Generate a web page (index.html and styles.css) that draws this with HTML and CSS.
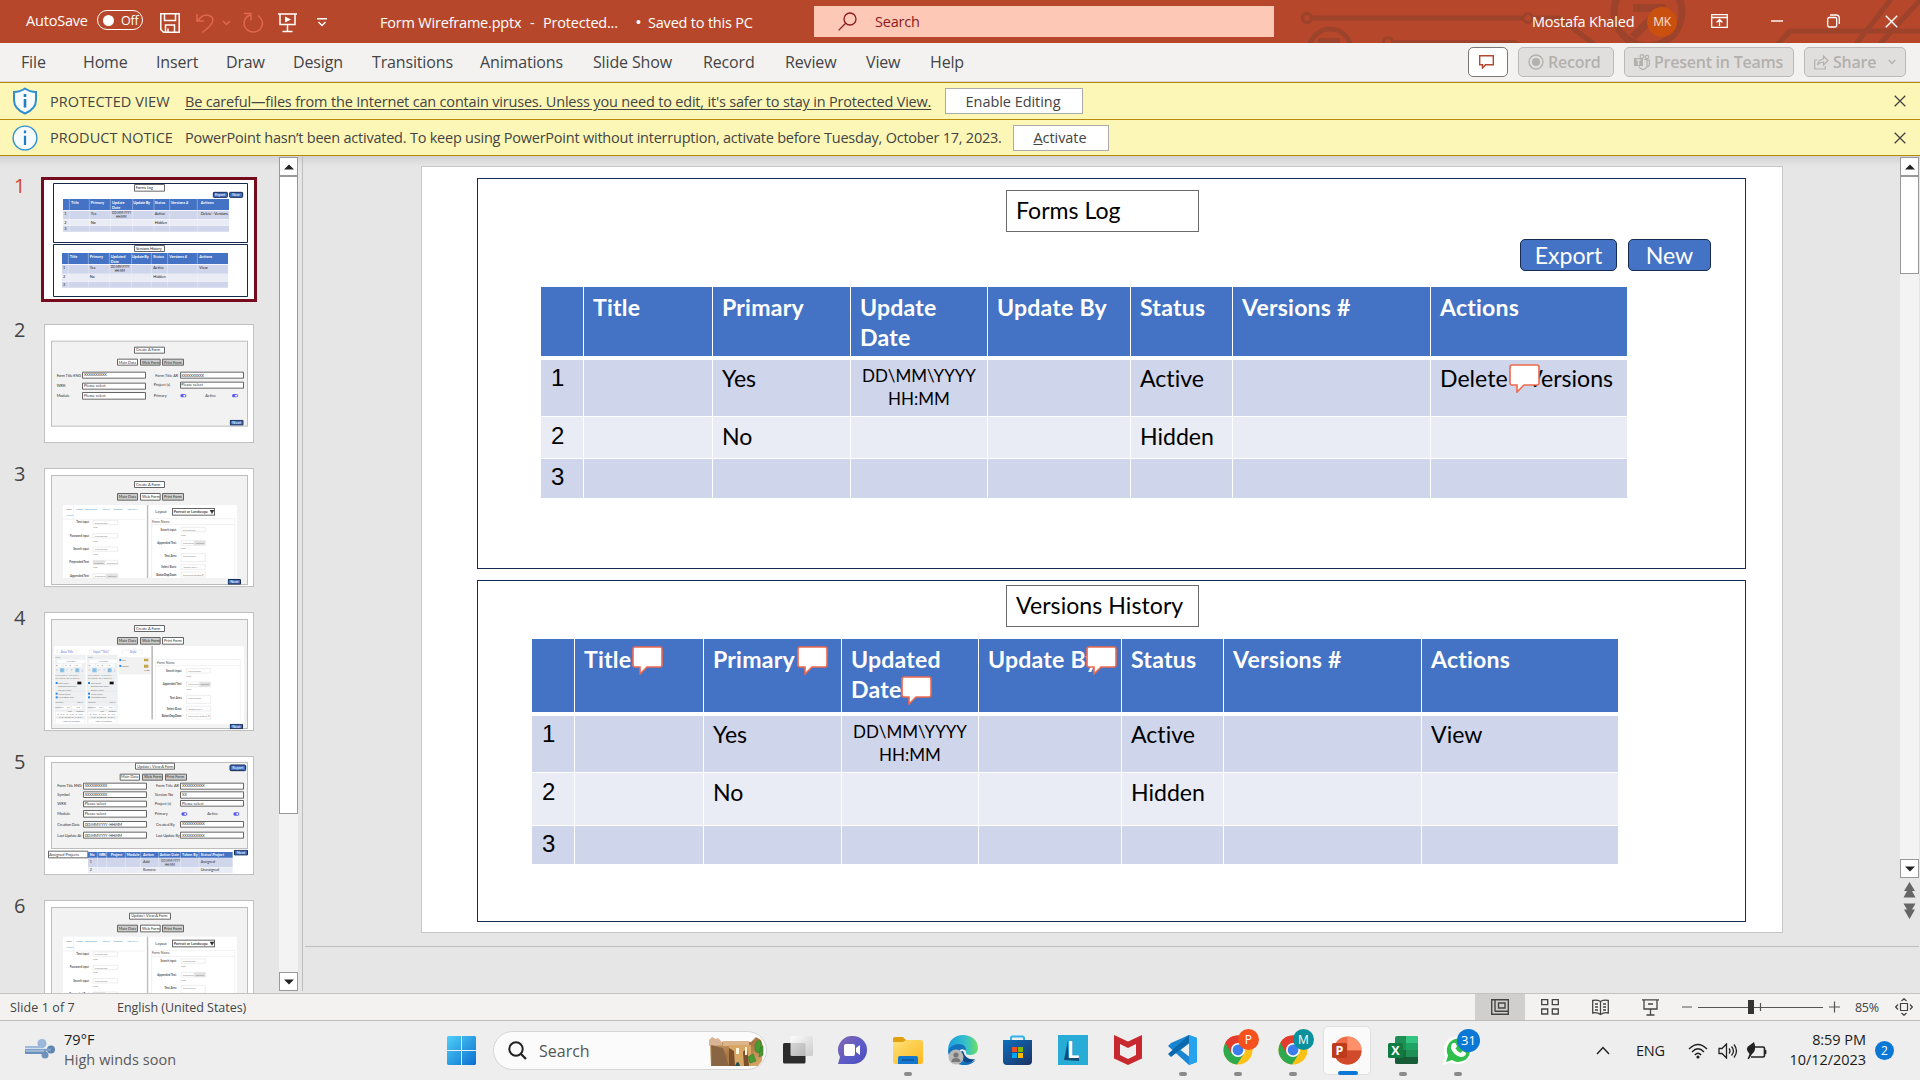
FILE: index.html
```html
<!DOCTYPE html>
<html lang="en">
<head>
<meta charset="utf-8">
<title>Form Wireframe.pptx - PowerPoint</title>
<link rel="stylesheet" href="styles.css">
</head>
<body>
<svg class="defs" width="0" height="0">
  <defs>
    <linearGradient id="gWin" x1="0" y1="0" x2="1" y2="1"><stop offset="0" stop-color="#4fd0f8"/><stop offset="1" stop-color="#0a6fd0"/></linearGradient>
    <linearGradient id="gPane" x1="0" y1="0" x2="1" y2="1"><stop offset="0" stop-color="#fff"/><stop offset="1" stop-color="#c4c4c4"/></linearGradient>
    <linearGradient id="gChat" x1="0" y1="0" x2="1" y2="1"><stop offset="0" stop-color="#8466b0"/><stop offset=".6" stop-color="#5a5bc8"/><stop offset="1" stop-color="#4a49b8"/></linearGradient>
    <linearGradient id="gFold" x1="0" y1="0" x2="1" y2="1"><stop offset="0" stop-color="#ffe07a"/><stop offset="1" stop-color="#fbb91c"/></linearGradient>
    <linearGradient id="gEdge" x1="0" y1="0" x2="1" y2="0"><stop offset="0" stop-color="#1b9de2"/><stop offset=".6" stop-color="#34c1c8"/><stop offset="1" stop-color="#6fdf63"/></linearGradient>
    <linearGradient id="gStore" x1="0" y1="0" x2="1" y2="1"><stop offset="0" stop-color="#0d6fc0"/><stop offset="1" stop-color="#1d3261"/></linearGradient>
    <linearGradient id="gRock" x1="0" y1="0" x2="1" y2="1"><stop offset="0" stop-color="#d8ae78"/><stop offset=".5" stop-color="#a87442"/><stop offset="1" stop-color="#dfae6a"/></linearGradient>
    <symbol id="note" viewBox="0 0 31 29"><path d="M3 1h25q2 0 2 2v16q0 2-2 2H15l-7 7v-7H3q-2 0-2-2V3q0-2 2-2z" fill="#fff" stroke="#ee6a4e" stroke-width="1.6"/></symbol>
    <symbol id="close" viewBox="0 0 12 12"><path d="M.7.7l10.6 10.6M11.3.7L.7 11.3" fill="none" stroke="currentColor" stroke-width="1.3"/></symbol>
    <symbol id="chrome" viewBox="0 0 30 30"><circle cx="15" cy="15" r="14.5" fill="#fbc116"/><path d="M2.4 7.8A14.5 14.5 0 0 1 27.6 7.8L15 8z" fill="#e33b2e"/><path d="M2.4 7.8A14.5 14.5 0 0 0 14 29.5l7-11L15 15z" fill="#2da94f"/><path d="M2.4 7.8L8.8 19 15 8h12.6A14.5 14.5 0 0 0 2.4 7.8z" fill="#e33b2e"/><circle cx="15" cy="15" r="7" fill="#fff"/><circle cx="15" cy="15" r="5.4" fill="#3b7ded"/></symbol>
    <!-- shared body of the web form slides, 630 x 357 slide units -->
    <symbol id="webform" viewBox="0 0 630 357">
      <rect x="57" y="111" width="250" height="219" fill="#fff"/><rect x="313" y="111" width="266" height="219" fill="#fff"/><rect x="309" y="111" width="3.5" height="219" fill="#bcbcbc"/>
      <path d="M57 154h32v-42M89 154h214" fill="none" stroke="#e6e6e6" stroke-width="1.5"/>
      <g font-size="7.800" fill="#5b9bd5"><text x="66" y="127" fill="#777">Input</text><text x="96" y="127" textLength="63">Radios / Checkboxes</text><text x="176" y="127">Select</text><text x="209" y="127">Buttons</text><text x="249" y="127" textLength="33">View HTML</text><text x="66" y="145">About</text></g>
      <g font-size="8.500" font-weight="bold" fill="#555" text-anchor="end"><text x="135" y="166">Text input</text><text x="135" y="206">Password input</text><text x="135" y="246">Search input</text><text x="135" y="286">Prepended Text</text><text x="135" y="326">Appended Text</text><text x="397" y="188">Search input</text><text x="397" y="228">Appended Text</text><text x="397" y="267">Text Area</text><text x="397" y="300">Select Basic</text><text x="397" y="323" textLength="60">Button Drop Down</text></g>
      <g fill="#fff" stroke="#ddd" stroke-width="1.5"><path d="M147 157h74v13h-74zM147 197h74v13h-74zM147 237h74v13h-74zM147 277h74v13h-74zM147 317h74v13h-74zM411 178h73v13h-73zM411 218h73v14h-73zM411 257h73v24h-73zM411 290h73v14h-73zM411 312h73v15h-73z"/></g>
      <path d="M147 277h36v13h-36zM186 317h36v13h-36zM450 218h34v14h-34z" fill="#e2e2e2"/>
      <g font-size="7.500" fill="#888"><text x="153" y="167">placeholder</text><text x="153" y="207">placeholder</text><text x="153" y="247">placeholder</text><text x="151" y="287">prepend</text><text x="189" y="287">placehold</text><text x="153" y="327">placehold</text><text x="191" y="327">append</text><text x="147" y="181">help</text><text x="147" y="221">help</text><text x="147" y="261">help</text><text x="147" y="301">help</text><text x="417" y="188">placeholder</text><text x="417" y="228">placehold</text><text x="455" y="228">append</text><text x="417" y="267">default text</text><text x="418" y="300">Option one ⌄</text><text x="417" y="323" textLength="64">placehold  Button ▾</text><text x="411" y="203">help</text><text x="411" y="243">help</text></g>
      <path d="M323 152h249v178M323 152v178M323 170h249" fill="none" stroke="#e2e2e2" stroke-width="1.5"/>
      <text x="324" y="164" font-size="10.500" fill="#555">Form Name</text><text x="334" y="135" font-size="11.500" fill="#333">Layout</text>
      <rect x="385.500" y="121.500" width="126" height="20" fill="#fff" stroke="#666" stroke-width="3"/><text x="389" y="135" font-size="11.500" textLength="103">Portrait or Landscape</text><path d="M497 126h14l-7 12z" fill="#333"/>
    </symbol>
    <symbol id="next" viewBox="0 0 38 16"><rect x="1.500" y="1.500" width="35" height="13" rx="2" fill="#4472c4" stroke="#172c51" stroke-width="3"/><text x="19" y="12" font-size="11" fill="#fff" text-anchor="middle">Next</text></symbol>
  </defs>
</svg>

<header class="titlebar">
  <svg class="circuit" width="640" height="43" viewBox="1280 0 640 43"><g fill="none" stroke="#9d432b" stroke-width="5"><circle cx="1307" cy="18" r="4.500" stroke-width="3.500"/><path d="M1312 18h211M1534 18h26l35 27"/><circle cx="1528" cy="18" r="4.500" stroke-width="3"/><circle cx="1388" cy="42" r="4.500" stroke-width="3"/><path d="M1394 42h120l8 4" stroke-width="4"/><circle cx="1330" cy="50" r="21"/><path d="M1318 42h22" stroke-width="8"/><circle cx="1648" cy="12" r="34" stroke-width="7"/><path d="M1633 8h33M1660 10l-27 27" stroke-width="8"/><path d="M1920 31h-130l-13 14M1892-2l-36 46M1922-2l-42 46"/></g></svg>
  <span class="autosave">AutoSave</span>
  <span class="toggle"><i></i>Off</span>
  <svg class="save" width="20" height="20" viewBox="0 0 20 20"><path d="M.8.8h18.400v18.400H3.500L.8 16.500zM4.500 1v6.500h11V1M5.500 19v-7h9v7M8 19v-3.500" fill="none" stroke="#fff" stroke-width="1.500"/></svg>
  <svg class="undo" width="36" height="22" viewBox="0 0 36 22"><path d="M1 2v7h7M1.500 9Q7 1.500 13 3.500T16 11Q14 15 6 20.500M27 9l3.500 3.500L34 9" fill="none" stroke="#e1684c" stroke-width="1.500"/></svg>
  <svg class="redo" width="21" height="22" viewBox="0 0 21 22"><path d="M1 1.500h7v7M7 3Q1 5.500 1 12a9.300 9 0 0 0 18.500 0Q19.500 7 15 3.500" fill="none" stroke="#e1684c" stroke-width="1.500"/></svg>
  <svg class="present" width="19" height="20" viewBox="0 0 19 20"><path d="M0 1h19M2 1v10.500h15V1M9.500 11.500V18M4.500 18.500h10" fill="none" stroke="#fff" stroke-width="1.500"/><path d="M7 3.500l6 3-6 3z" fill="#fff"/></svg>
  <svg class="custom" width="10" height="9" viewBox="0 0 10 9"><path d="M0 .8h10M1.500 4L5 7.500 8.500 4" fill="none" stroke="#fff" stroke-width="1.400"/></svg>
  <span class="doc"><span>Form Wireframe.pptx</span><span>-</span><span>Protected...</span><b>•</b><span>Saved to this PC</span></span>
  <div class="search"><svg width="19" height="19" viewBox="0 0 19 19"><circle cx="12" cy="7" r="6" fill="none" stroke="#8c1a1c" stroke-width="1.300"/><path d="M7.700 11.300L.6 18.400" stroke="#8c1a1c" stroke-width="1.300"/></svg>Search</div>
  <span class="user">Mostafa Khaled</span><span class="avatar">MK</span>
  <svg class="win w1" width="17" height="14" viewBox="0 0 17 14"><path d="M.7.7h15.600v12.600H.7zM.7 3.500h15.600M8.500 12V6M5.500 8.500l3-3 3 3" fill="none" stroke="#fff" stroke-width="1.300"/></svg>
  <svg class="win w2" width="12" height="2"><path d="M0 1h12" stroke="#fff" stroke-width="1.400"/></svg>
  <svg class="win w3" width="13" height="14" viewBox="0 0 13 14"><rect x=".7" y="3.500" width="9" height="9.500" rx="1.500" fill="none" stroke="#fff" stroke-width="1.300"/><path d="M3 1h6q3.300 0 3.300 3.300V10" fill="none" stroke="#fff" stroke-width="1.300"/></svg>
  <svg class="win w4" width="13" height="13"><use href="#close"/></svg>
</header>

<nav class="ribbon">
  <div class="tabs"><span>File</span><span>Home</span><span>Insert</span><span>Draw</span><span>Design</span><span>Transitions</span><span>Animations</span><span>Slide Show</span><span>Record</span><span>Review</span><span>View</span><span>Help</span></div>
  <div class="rbtn comment"><svg width="15" height="14" viewBox="0 0 15 14"><path d="M.7.7h13.600v9H6.500L3.500 13V9.700H.7z" fill="none" stroke="#b7472a" stroke-width="1.400"/></svg></div>
  <div class="rbtn rec"><svg width="16" height="16" viewBox="0 0 16 16"><circle cx="8" cy="8" r="7" fill="none" stroke="#b3b0ad" stroke-width="1.300"/><circle cx="8" cy="8" r="4" fill="#b3b0ad"/></svg>Record</div>
  <div class="rbtn teams"><svg width="16" height="16" viewBox="0 0 16 16"><path d="M0 4h9v8H0z" fill="#b3b0ad"/><path d="M2.500 6h4M4.500 6v5" stroke="#e1dfdd" stroke-width="1.400"/><g fill="none" stroke="#b3b0ad" stroke-width="1.200"><circle cx="8" cy="2.500" r="1.900"/><circle cx="13" cy="3" r="1.700"/><path d="M10 5.500h3v7q-1.500 3-4 3t-4-3M13 6h2.300v5q-1 2-2.500 2"/></g></svg>Present in Teams</div>
  <div class="rbtn share"><svg width="15" height="16" viewBox="0 0 15 16"><path d="M3.500 6H.7v9h10.600v-3M3.500 11q.5-5.500 6-6V2l4.500 4.500L9.500 11V8q-4 0-6 3z" fill="none" stroke="#b3b0ad" stroke-width="1.200"/></svg>Share<svg class="caret" width="8" height="6"><path d="M.7 1l3.300 3.500L7.300 1" fill="none" stroke="#b3b0ad" stroke-width="1.300"/></svg></div>
</nav>

<section class="notice first">
  <svg class="nicon" width="26" height="28" viewBox="0 0 26 28"><path d="M13 1.500Q18 5 24 5v8q0 9-11 13.500Q2 22 2 13V5q6 0 11-3.500z" fill="#f7fbfd" stroke="#2e8fd0" stroke-width="2"/><path d="M13 12v8.500M13 7v3" stroke="#1e7fc4" stroke-width="2.600"/></svg>
  <span class="kind">PROTECTED VIEW</span><span class="msg under">Be careful—files from the Internet can contain viruses. Unless you need to edit, it's safer to stay in Protected View.</span><span class="btn enable">Enable Editing</span>
  <svg class="x" width="12" height="12"><use href="#close"/></svg>
</section>
<section class="notice">
  <svg class="nicon" width="28" height="28" viewBox="0 0 28 28"><circle cx="14" cy="14" r="12.800" fill="#f7fbfd" stroke="#2e8fd0" stroke-width="1.500"/><path d="M14 11.500v10M14 6v3" stroke="#1e7fc4" stroke-width="2.400"/></svg>
  <span class="kind k2">PRODUCT NOTICE</span><span class="msg m2">PowerPoint hasn’t been activated. To keep using PowerPoint without interruption, activate before Tuesday, October 17, 2023.</span><span class="btn act"><u>A</u>ctivate</span>
  <svg class="x" width="12" height="12"><use href="#close"/></svg>
</section>

<main class="work">
  <aside class="thumbs">
    <div class="row on"><span class="num">1</span>
      <svg class="thumb" viewBox="0 0 630 357"><rect width="630" height="357" fill="#fff"/>
        <g fill="none" stroke="#16294d" stroke-width="3"><path d="M28.500 10.500h582v177h-582zM28.500 193.500h582v156h-582z"/></g>
        <g fill="#fff" stroke="#666" stroke-width="3"><path d="M271.500 13.500h90v20h-90zM271.500 196.500h90v18h-90z"/></g>
        <g fill="#4472c4" stroke="#16294d" stroke-width="3"><rect x="508" y="37" width="42" height="15" rx="2"/><rect x="557" y="37" width="39" height="15" rx="2"/></g>
        <path d="M57 57h498v33H57zM54 219h498v33H54z" fill="#4472c4"/>
        <path d="M57 92h498v26H57zM57 138h498v17H57zM54 254h498v27H54zM54 306h498v17H54z" fill="#cfd5ea"/><path d="M57 119h498v18H57zM54 282h498v23H54z" fill="#e9ebf5"/>
        <path d="M76 57v98M136 57v98M199 57v98M266 57v98M330 57v98M377 57v98M460 57v98M73 219v104M133 219v104M196 219v104M263 219v104M322 219v104M371 219v104M460 219v104" stroke="#fff" stroke-width="1.500" opacity=".7"/>
        <g font-size="11.500" fill="#222"><text x="275" y="27">Forms Log</text><text x="275" y="210" textLength="78">Versions History</text>
        <text x="61" y="105">1</text><text x="61" y="131">2</text><text x="61" y="150">3</text><text x="140" y="105">Yes</text><text x="140" y="131">No</text><text x="204" y="102" font-size="8.500">DD\MM\YYYY</text><text x="216" y="114" font-size="8.500">HH:MM</text><text x="332" y="105">Active</text><text x="332" y="131">Hidden</text><text x="470" y="105" textLength="82">Delete - Versions</text>
        <text x="57" y="267">1</text><text x="57" y="294">2</text><text x="57" y="318">3</text><text x="137" y="267">Yes</text><text x="137" y="294">No</text><text x="200" y="264" font-size="8.500">DD\MM\YYYY</text><text x="212" y="275" font-size="8.500">HH:MM</text><text x="328" y="267">Active</text><text x="328" y="294">Hidden</text><text x="466" y="267">View</text></g>
        <g font-size="11.500" font-weight="bold" fill="#fff"><text x="81" y="72">Title</text><text x="140" y="72">Primary</text><text x="204" y="72">Update</text><text x="204" y="86">Date</text><text x="268" y="72" textLength="50">Update By</text><text x="332" y="72">Status</text><text x="380" y="72">Versions #</text><text x="470" y="72">Actions</text><text x="77" y="234">Title</text><text x="137" y="234">Primary</text><text x="200" y="234">Updated</text><text x="200" y="249">Date</text><text x="264" y="234" textLength="50">Update By</text><text x="328" y="234">Status</text><text x="376" y="234">Versions #</text><text x="466" y="234">Actions</text></g>
        <g font-size="10.500" fill="#fff"><text x="513" y="48">Export</text><text x="565" y="48">New</text></g>
      </svg></div>
    <div class="row"><span class="num">2</span>
      <svg class="thumb" viewBox="0 0 630 357"><rect width="630" height="357" fill="#fff"/><rect x="22.500" y="51.500" width="588" height="255" fill="#f2f2f2" stroke="#bdbdbd" stroke-width="3"/>
        <g fill="#fff" stroke="#666" stroke-width="3"><path d="M271.500 69.500h90v18h-90zM220.500 105.500h60v18h-60zM115.500 144.500h189v18h-189zM115.500 177.500h189v18h-189zM115.500 205.500h189v20h-189zM409.500 144.500h189v18h-189zM409.500 174.500h189v18h-189z"/><path d="M289.500 105.500h59v18h-59zM355.500 105.500h63v18h-63z" fill="#ccc"/></g>
        <g font-size="11.500" fill="#333"><text x="276" y="81">Create A Form</text><text x="224" y="119">Main Data</text><text x="294" y="119">Web Form</text><text x="360" y="119">Print Form</text><text x="38" y="158" textLength="73">Form Title ENG</text><text x="38" y="189">WRK</text><text x="38" y="218">Module</text><text x="120" y="156" textLength="68">XXXXXXXXXX</text><text x="120" y="189">Please select</text><text x="120" y="218">Please select</text><text x="334" y="158">Form Title AR</text><text x="329" y="186">Project (s)</text><text x="329" y="218">Primary</text><text x="484" y="218">Active</text><text x="412" y="158" textLength="68">XXXXXXXXXX</text><text x="412" y="186">Please select</text></g>
        <g fill="#5b5cf0"><rect x="409" y="210" width="18" height="10" rx="5"/><rect x="564" y="210" width="18" height="10" rx="5"/></g><g fill="#fff"><circle cx="421" cy="215" r="3"/><circle cx="576" cy="215" r="3"/></g>
        <use href="#next" x="557" y="287" width="42" height="18"/></svg></div>
    <div class="row"><span class="num">3</span>
      <svg class="thumb" viewBox="0 0 630 357"><rect width="630" height="357" fill="#fff"/><rect x="22.500" y="22.500" width="588" height="327" fill="#f2f2f2" stroke="#bdbdbd" stroke-width="3"/>
        <g fill="#ccc" stroke="#666" stroke-width="3"><path d="M271.500 40.500h90v18h-90zM289.500 76.500h59v20h-59z" fill="#fff"/><path d="M220.500 76.500h60v20h-60zM355.500 76.500h63v20h-63z"/></g>
        <g font-size="11.500" fill="#333"><text x="276" y="53">Create A Form</text><text x="224" y="90">Main Data</text><text x="294" y="90">Web Form</text><text x="360" y="90">Print Form</text></g>
        <use href="#webform" width="630" height="357"/><use href="#next" x="551" y="333" width="40" height="17"/></svg></div>
    <div class="row"><span class="num">4</span>
      <svg class="thumb" viewBox="0 0 630 357"><rect width="630" height="357" fill="#fff"/><rect x="22.500" y="22.500" width="588" height="327" fill="#f2f2f2" stroke="#bdbdbd" stroke-width="3"/>
        <g fill="#ccc" stroke="#666" stroke-width="3"><path d="M271.500 40.500h90v18h-90zM355.500 76.500h63v20h-63z" fill="#fff"/><path d="M220.500 76.500h60v20h-60zM289.500 76.500h59v20h-59z"/></g>
        <g font-size="11.500" fill="#333"><text x="276" y="53">Create A Form</text><text x="224" y="90">Main Data</text><text x="294" y="90">Web Form</text><text x="360" y="90">Print Form</text></g>
        <path d="M30 102h570v234H30z" fill="#fff"/><path d="M33 128h92v206H33zM129 128h92v206h-92z" fill="#eef0f2"/><path d="M225 135h95v52h-95z" fill="#f1f1f1"/><rect x="322" y="102" width="5" height="220" fill="#bcbcbc"/>
        <g fill="none" stroke="#e4e4e4" stroke-width="1.500"><path d="M40 128v-14h58v14M136 128v-14h58v14M236 128v-14h58v14M335 142h254v180M335 142v180M335 161h254M34 268h90M130 268h90M34 238h90M130 238h90"/></g>
        <g font-size="9" fill="#6a74dd"><text x="50" y="124">Area Title</text><text x="148" y="124">Input "Title"</text><text x="258" y="124">Style</text></g>
        <g id="props"><g fill="#fff"><path d="M40 143h82v10H40zM40 155h16v10H40zM60 155h16v10H60zM80 155h34v10H80zM50 282h30v9H50zM84 282h30v9H84zM36 301h86v10H36zM36 322h86v10H36z"/></g><path d="M48 169h13v12H48zM94 169h12v12H94z" fill="#8bc3ea"/><g fill="#2b8be8"><rect x="35" y="210" width="6" height="6"/><rect x="35" y="242" width="6" height="6"/><rect x="35" y="253" width="6" height="6"/></g><path d="M100 209h12v8h-12z" fill="#111"/>
        <g font-size="7" fill="#777"><text x="34" y="139">Font</text><text x="66" y="150">Helvetica  ⌄</text><text x="37" y="163" textLength="80">B / U S 16 ⌄</text><text x="37" y="178" textLength="80">≡ ≡ ≡ ↑ ↕ ↓</text><text x="34" y="191" textLength="82">Position Center ⌄</text><text x="34" y="201" textLength="82">Writing Direction ⌄</text><text x="43" y="216">Text Color</text><text x="43" y="226">Background Color</text><text x="43" y="236">Border Color</text><text x="43" y="248">Word Wrap</text><text x="43" y="259">Formatted Text</text><text x="34" y="274">Opacity</text><text x="98" y="274">100 %</text><text x="34" y="289">Spacing</text><text x="68" y="289">5.0</text><text x="98" y="289">5.0</text><text x="72" y="299">Top</text><text x="97" y="299">Bottom</text><text x="40" y="309" textLength="76">0.00 0.00 0.00</text><text x="44" y="318" textLength="70">Left Bottom Right</text><text x="56" y="331">Apply to Section</text></g></g>
        <use href="#props" x="97"/>
        <g fill="#2b8be8"><rect x="226" y="141" width="6" height="6"/><rect x="226" y="159" width="6" height="6"/></g><path d="M300 140h13v8h-13zM300 158h13v9h-13z" fill="#c7a443"/>
        <g font-size="8" fill="#555"><text x="235" y="148">Fill</text><text x="235" y="166">Color</text><text x="300" y="178">1.00</text></g>
        <text x="339" y="155" font-size="10.500" fill="#555">Form Name</text>
        <g font-size="8.500" font-weight="bold" fill="#555" text-anchor="end"><text x="413" y="180">Search input</text><text x="413" y="220">Appended Text</text><text x="413" y="260">Text Area</text><text x="413" y="293">Select Basic</text><text x="413" y="316" textLength="60">Button Drop Down</text></g>
        <path d="M427 170h73v13h-73zM427 210h73v14h-73zM427 250h73v24h-73zM427 283h73v14h-73zM427 306h73v15h-73z" fill="#fff" stroke="#ddd" stroke-width="1.500"/><path d="M466 211h33v13h-33z" fill="#ddd"/>
        <g font-size="7.500" fill="#888"><text x="433" y="180">placeholder</text><text x="433" y="220">placehold</text><text x="470" y="220">append</text><text x="433" y="260">default text</text><text x="433" y="293">Option one  ⌄</text><text x="433" y="316" textLength="64">placehold  Button ▾</text><text x="427" y="195">help</text><text x="427" y="235">help</text></g>
        <use href="#next" x="557" y="335" width="40" height="17"/></svg></div>
    <div class="row"><span class="num">5</span>
      <svg class="thumb" viewBox="0 0 630 357"><rect width="630" height="357" fill="#fff"/><rect x="22.500" y="19.500" width="588" height="258" fill="#f2f2f2" stroke="#bdbdbd" stroke-width="3"/>
        <g fill="#fff" stroke="#666" stroke-width="3"><path d="M274.500 21.500h117v18h-117zM228.500 54.500h58v18h-58zM118.500 81.500h189v18h-189zM118.500 107.500h189v17h-189zM118.500 135.500h189v17h-189zM118.500 163.500h189v20h-189zM118.500 196.500h189v17h-189zM118.500 228.500h189v18h-189zM409.500 81.500h189v18h-189zM409.500 107.500h189v19h-189zM409.500 133.500h189v17h-189zM409.500 196.500h189v17h-189zM409.500 228.500h189v18h-189zM13.500 285.500h118v20h-118z"/><path d="M295.500 54.500h60v18h-60zM364.500 54.500h63v18h-63z" fill="#ccc"/></g>
        <g font-size="11.500" fill="#333"><text x="280" y="35">Update\ View A Form</text><text x="231" y="67">Main Data</text><text x="300" y="67">Web Form</text><text x="367" y="67">Print Form</text>
        <text x="40" y="94" textLength="73">Form Title ENG</text><text x="40" y="120">Symbol</text><text x="40" y="148">WRK</text><text x="40" y="178">Module</text><text x="40" y="210" textLength="67">Creation Date</text><text x="40" y="243" textLength="72">Last Update At</text><text x="122" y="94" textLength="68">XXXXXXXXXX</text><text x="122" y="120" textLength="68">XXXXXXXXXX</text><text x="122" y="147">Please select</text><text x="122" y="177">Please select</text><text x="122" y="209" textLength="112">DD\MM\YYYY - HH:MM</text><text x="122" y="242" textLength="112">DD\MM\YYYY - HH:MM</text>
        <text x="336" y="94">Form Title AR</text><text x="332" y="120">Version No</text><text x="332" y="148">Project (s)</text><text x="332" y="178">Primary</text><text x="490" y="178">Active</text><text x="336" y="210">Created By</text><text x="336" y="243" textLength="71">Last Update By</text><text x="414" y="94" textLength="68">XXXXXXXXXX</text><text x="414" y="120">XX</text><text x="414" y="147">Please select</text><text x="414" y="208" textLength="68">XXXXXXXXXX</text><text x="414" y="242" textLength="68">XXXXXXXXXX</text><text x="16" y="300">Assigned Projects</text></g>
        <g fill="#5b5cf0"><rect x="412" y="169" width="18" height="10" rx="5"/><rect x="568" y="169" width="18" height="10" rx="5"/></g><g fill="#fff"><circle cx="424" cy="174" r="3"/><circle cx="580" cy="174" r="3"/></g>
        <path d="M132 288h434v17H132z" fill="#4472c4"/><path d="M132 306h434v27H132z" fill="#cfd5ea"/><path d="M132 334h434v17H132z" fill="#e9ebf5"/><path d="M160 288v63M188 288v63M244 288v63M290 288v63M344 288v63M409 288v63M465 288v63" stroke="#fff" stroke-width="1.500" opacity=".7"/>
        <g font-size="11" font-weight="bold" fill="#fff"><text x="137" y="300">No</text><text x="164" y="300" textLength="22">WRK</text><text x="200" y="300">Project</text><text x="248" y="300" textLength="38">Module</text><text x="297" y="300">Action</text><text x="347" y="300" textLength="58">Action Date</text><text x="414" y="300" textLength="47">Taken By</text><text x="470" y="300" textLength="70">Status\Project</text></g>
        <g font-size="11" fill="#333"><text x="137" y="321">1</text><text x="137" y="345">2</text><text x="297" y="321">Add</text><text x="297" y="345">Remove</text><text x="351" y="318" font-size="8.500">DD\MM\YYYY</text><text x="362" y="330" font-size="8.500">HH:MM</text><text x="470" y="321">Assigned</text><text x="470" y="345">Unassigned</text></g>
        <rect x="558" y="27" width="47" height="17" rx="3" fill="#4472c4" stroke="#16294d" stroke-width="3"/><text x="565" y="39" font-size="11" fill="#fff">Report</text><use href="#next" x="570" y="281" width="42" height="18"/></svg></div>
    <div class="row"><span class="num">6</span>
      <svg class="thumb" viewBox="0 0 630 357"><rect width="630" height="357" fill="#fff"/><rect x="22.500" y="22.500" width="588" height="327" fill="#f2f2f2" stroke="#bdbdbd" stroke-width="3"/>
        <g fill="#ccc" stroke="#666" stroke-width="3"><path d="M256.500 39.500h123v18h-123zM289.500 75.500h59v20h-59z" fill="#fff"/><path d="M220.500 75.500h60v20h-60zM355.500 75.500h63v20h-63z"/></g>
        <g font-size="11.500" fill="#333"><text x="262" y="52">Update\ View A Form</text><text x="224" y="89">Main Data</text><text x="294" y="89">Web Form</text><text x="360" y="89">Print Form</text></g>
        <use href="#webform" y="-1" width="630" height="357"/></svg></div>
  </aside>
  <div class="sbar left"><span class="sbtn"><svg width="10" height="6"><path d="M0 5.500L5 .5l5 5z" fill="#222"/></svg></span><span class="sthumb"></span><span class="strack"></span><span class="sbtn"><svg width="10" height="6"><path d="M0 .5L5 5.500l5-5z" fill="#222"/></svg></span></div>
  <div class="editor">
    <div class="canvas">
      <article class="slide">
        <section class="frame f1">
          <div class="label">Forms Log</div>
          <div class="acts"><span class="export">Export</span><span class="new">New</span></div>
          <div class="grid g1">
            <b></b><b>Title</b><b>Primary</b><b>Update Date</b><b>Update By</b><b>Status</b><b>Versions #</b><b>Actions</b>
            <i>1</i><p></p><p>Yes</p><p class="dt">DD\MM\YYYY HH:MM</p><p></p><p>Active</p><p></p><p class="del">Delete - Versions<svg class="pin n0"><use href="#note"/></svg></p>
            <i class="alt">2</i><p class="alt"></p><p class="alt">No</p><p class="alt"></p><p class="alt"></p><p class="alt">Hidden</p><p class="alt"></p><p class="alt"></p>
            <i>3</i><p></p><p></p><p></p><p></p><p></p><p></p><p></p>
          </div>
        </section>
        <section class="frame f2">
          <div class="label">Versions History</div>
          <div class="grid g2">
            <b></b><b>Title<svg class="pin n1"><use href="#note"/></svg></b><b>Primary<svg class="pin n2"><use href="#note"/></svg></b><b>Updated Date<svg class="pin n3"><use href="#note"/></svg></b><b>Update By<svg class="pin n4"><use href="#note"/></svg></b><b>Status</b><b>Versions #</b><b>Actions</b>
            <i>1</i><p></p><p>Yes</p><p class="dt">DD\MM\YYYY HH:MM</p><p></p><p>Active</p><p></p><p>View</p>
            <i class="alt">2</i><p class="alt"></p><p class="alt">No</p><p class="alt"></p><p class="alt"></p><p class="alt">Hidden</p><p class="alt"></p><p class="alt"></p>
            <i>3</i><p></p><p></p><p></p><p></p><p></p><p></p><p></p>
          </div>
        </section>
      </article>
      <div class="sbar right"><span class="sbtn"><svg width="10" height="6"><path d="M0 5.500L5 .5l5 5z" fill="#222"/></svg></span><span class="sthumb"></span><span class="strack"></span><span class="sbtn"><svg width="10" height="6"><path d="M0 .5L5 5.500l5-5z" fill="#222"/></svg></span>
        <svg class="jump" width="13" height="38" viewBox="0 0 13 38"><path d="M6.500 0L12 9H9l3.500 6.500H.5L4 9H1zM.5 21.500h12L9 27.500h3L6.500 37 1 27.500h3z" fill="#666"/></svg></div>
    </div>
    <div class="notes"></div>
  </div>
</main>

<footer class="status">
  <span class="s1">Slide 1 of 7</span><span class="s2">English (United States)</span>
  <span class="view cur"><svg width="18" height="16" viewBox="0 0 18 16"><path d="M.7.7h16.600v14.600H.7zM4 1v11.500M4 12.300h13M7.500 4h6.500v5H7.500z" fill="none" stroke="#444" stroke-width="1.400"/></svg></span>
  <span class="view"><svg width="18" height="16" viewBox="0 0 18 16"><path d="M.7.7h6v5h-6zM11.300.7h6v5h-6zM.7 10h6v5h-6zM11.300 10h6v5h-6z" fill="none" stroke="#444" stroke-width="1.300"/></svg></span>
  <span class="view"><svg width="17" height="17" viewBox="0 0 17 17"><path d="M8.500 2.500Q5 .5.700 1.500v12.500Q5 13 8.500 15.500 12 13 16.300 14V1.500Q12 .5 8.500 2.500zM8.500 2.500V16M3 5h3M3 8h3M3 11h3M11 5h3M11 8h3M11 11h3" fill="none" stroke="#444" stroke-width="1.300"/></svg></span>
  <span class="view"><svg width="17" height="17" viewBox="0 0 17 17"><path d="M0 .8h17M2 1v9h13V1M8.500 10v5.500M4.500 16h8M6 5h5" fill="none" stroke="#444" stroke-width="1.300"/></svg></span>
  <svg class="zoom" width="158" height="16" viewBox="0 0 158 16"><path d="M0 8h10M16 8.500h125M147 8h11M152.500 2.500v11M78.500 4v8" fill="none" stroke="#555" stroke-width="1.200"/><path d="M66 1h6v14h-6z" fill="#333"/></svg>
  <span class="pct">85%</span>
  <svg class="fit" width="18" height="18" viewBox="0 0 18 18"><path d="M5.500 5.500h7v7h-7zM6.500 3L9 .7 11.500 3M6.500 15L9 17.300 11.500 15M3 6.500L.7 9 3 11.500M15 6.500L17.300 9 15 11.500" fill="none" stroke="#444" stroke-width="1.200"/></svg>
</footer>

<footer class="taskbar">
  <svg class="wind" width="30" height="20" viewBox="0 0 30 20"><circle cx="17" cy="4.500" r="4.500" fill="#9ab6d8"/><circle cx="26" cy="10.500" r="4" fill="#5f86b0"/><circle cx="20" cy="16" r="3.500" fill="#6d92bb"/><path d="M0 7h19v2.500H0z" fill="#9fbbdc"/><path d="M0 9.500h26V12H0z" fill="#7d9fc8"/><path d="M0 12h21v3H0z" fill="#6c90bc"/><path d="M0 9.500h22M1 12h18" stroke="#dfe8f2" stroke-width=".8"/></svg>
  <span class="weather">79°F<small>High winds soon</small></span>
  <span class="app start"><svg width="29" height="29" viewBox="0 0 29 29"><path d="M1 0h13v14H0V1zM15 0h13l1 1v13H15zM0 15h14v14H1l-1-1zM15 15h14v13l-1 1H15z" fill="url(#gWin)"/></svg></span>
  <div class="find"><svg width="19" height="19" viewBox="0 0 19 19"><circle cx="8" cy="8" r="6.700" fill="none" stroke="#222" stroke-width="2"/><path d="M13 13l5 5" stroke="#222" stroke-width="2.300"/></svg><span>Search</span>
    <svg class="scene" width="56" height="30" viewBox="0 0 56 30"><path d="M1 8l3-5 6 1 2 2 10-1 3 3 7-3 10 1 5-5 5 3 2 6-1 15-4 5H2z" fill="url(#gRock)"/><path d="M0 10V4l3-3 4 2 2-1 4 4v3z" fill="#d9b596"/><path d="M14 5h26v5H14z" fill="#dcb48c"/><path d="M20 9h22v8l-5 13H20z" fill="#d9a765"/><path d="M2 9l12 3 6 18H3z" fill="#8a6544"/><path d="M20 12l5 3 1 15h-6zM38 12l-4 4 1 14h5z" fill="#7a4f2c"/><path d="M27 12h3v6h-3zM36 11h2v8h-2z" fill="#fff3dc"/><path d="M26 30q3-8 5 0" fill="#1f4f58"/><path d="M46 9q3-7 6-3v9q-4 4-6-1zM39 21l5-3 3 7-6 2zM51 12l3-2v9l-4 2z" fill="#4a9a34" stroke="#2f7d2a" stroke-width=".6"/></svg></div>
  <span class="app tv"><svg width="30" height="28" viewBox="0 0 30 28"><rect y="7" width="22.500" height="20.500" rx="1.500" fill="#2c2c2c"/><rect x="7.500" y="0" width="22.500" height="20" rx="1.500" fill="url(#gPane)" opacity=".85"/></svg></span>
  <span class="app"><svg width="29" height="28" viewBox="0 0 29 28"><path d="M15 0a14 14 0 0 1 0 28H0l2-7A14 14 0 0 1 15 0z" fill="url(#gChat)"/><rect x="6" y="8" width="11" height="12" rx="2" fill="#fff"/><path d="M18 12l4-3v10l-4-3z" fill="#fff"/></svg></span>
  <span class="app run"><svg width="30" height="27" viewBox="0 0 30 27"><path d="M0 2q0-2 2-2h8l3 3h14v6H0z" fill="#e0a00f"/><path d="M0 5h10l3-2h15q2 0 2 2v20q0 2-2 2H2q-2 0-2-2z" fill="url(#gFold)"/><path d="M5 27v-6q0-2 2-2h16q2 0 2 2v6z" fill="#1478cc"/><path d="M9 23h12" stroke="#0b559c" stroke-width="1.500"/></svg></span>
  <span class="app"><svg width="30" height="30" viewBox="0 0 30 30"><path d="M0 16C0 5 7 0 15 0s15 5 15 13q0 7-8 7-5 0-4-3 0-5-6-5-8 0-12 4z" fill="url(#gEdge)"/><path d="M0 16q3-7 11-7 7 0 7 7-3-3-6-1-4 8 4 12 6 2 12-2-6 6-14 5Q1 28 0 16z" fill="#1473bd"/><path d="M11 17q0 9 8 11 5 0 8-4-9 2-12-8z" fill="#0d4a8e"/><circle cx="8" cy="22" r="7.500" fill="#b9b9b9"/><circle cx="8" cy="20" r="2.600" fill="#777"/><path d="M3.500 27q0-4 4.500-4t4.500 4z" fill="#777"/></svg></span>
  <span class="app"><svg width="29" height="30" viewBox="0 0 29 30"><path d="M8 6V3q0-1.500 1.500-1.500h10Q21 1.500 21 3v3" fill="none" stroke="#2fb3ee" stroke-width="2"/><path d="M0 5h29v21q0 4-4 4H4q-4 0-4-4z" fill="url(#gStore)"/><path d="M9 12h5v5H9z" fill="#f25022"/><path d="M15 12h5v5h-5z" fill="#7fba00"/><path d="M9 18h5v5H9z" fill="#00a4ef"/><path d="M15 18h5v5h-5z" fill="#ffb900"/></svg></span>
  <span class="app"><svg class="open" width="30" height="30" viewBox="0 0 30 30"><path d="M0 0h30v30H0z" fill="#27acd8"/><path d="M10 5L6 25l15 1V23H11z" fill="#124d78"/><text x="9" y="23" font-family="Lato,sans-serif" font-size="23" font-weight="bold" fill="#fff">L</text></svg></span>
  <span class="app"><svg width="28" height="30" viewBox="0 0 28 30"><path d="M0 0l14 6.500L28 0v23.500L14 30 0 23.500z" fill="#c8292f"/><path d="M6 9l8 4 8-4v11l-8 4-8-4z" fill="#eee"/></svg></span>
  <span class="app run"><svg width="29" height="30" viewBox="0 0 29 30"><path d="M21 0l8 3v24l-8 3L0 11l3-3z" fill="#1a86d2"/><path d="M21 0L0 19l3 3L21 8z" fill="#0b68ad"/><path d="M21 0l8 3v24l-8 3z" fill="#27a2ee"/><path d="M21 8.500v13L12.500 15z" fill="#eee"/></svg></span>
  <span class="app run"><svg width="30" height="30"><use href="#chrome"/></svg><em class="badge org">P</em></span>
  <span class="app run"><svg width="30" height="30"><use href="#chrome"/></svg><em class="badge teal">M</em></span>
  <span class="app run active"><svg width="30" height="29" viewBox="0 0 30 29"><circle cx="15.500" cy="14.500" r="14" fill="#ee6c47"/><path d="M15.500.5a14 14 0 0 1 14 14h-14z" fill="#ff9069"/><path d="M1.500 14.500h28a14 14 0 0 1-28 0z" fill="#d04a2b"/><rect y="7" width="15" height="15" rx="1.500" fill="#be3a1c"/><text x="7.500" y="19" text-anchor="middle" font-family="Open Sans,sans-serif" font-size="12.500" font-weight="bold" fill="#fff">P</text></svg></span>
  <span class="app run"><svg width="30" height="28" viewBox="0 0 30 28"><rect x="7" width="23" height="28" rx="2" fill="#1f8f55"/><path d="M18 0h10q2 0 2 2v5H18z" fill="#33c481"/><path d="M18 7h12v7H18z" fill="#21a366"/><path d="M7 21h23v5q0 2-2 2H9q-2 0-2-2z" fill="#185c37"/><path d="M7 14h11v7H7z" fill="#17713f"/><rect y="7" width="15" height="15" rx="1.500" fill="#107c41"/><text x="7.500" y="19" text-anchor="middle" font-family="Open Sans,sans-serif" font-size="12.500" font-weight="bold" fill="#fff">X</text></svg></span>
  <span class="app run"><svg width="30" height="30" viewBox="0 0 30 30"><path d="M0 30l2.500-8A14 14 0 1 1 8 27.500z" fill="#fff"/><path d="M3 27l2-6.500A11.700 11.700 0 1 1 9 25z" fill="#2fbf4a"/><path d="M10 8q2-1 3 1l1 2.500-1.500 2q2 3.500 5 4.500l2-2 3 1.500q1 .5 0 2.500-2 2.500-5 2-7-2-9.500-8.500-.5-3.500 2-5.500z" fill="#fff"/></svg><em class="badge blue">31</em></span>
  <svg class="up" width="14" height="9"><path d="M1 8l6-6.500L13 8" fill="none" stroke="#222" stroke-width="1.500"/></svg>
  <span class="eng">ENG</span>
  <svg class="wifi" width="20" height="16" viewBox="0 0 20 16"><path d="M1 6q9-9 18 0M4 9q6-6.500 12 0M6.800 12q3.200-3.500 6.400 0" fill="none" stroke="#222" stroke-width="1.400"/><circle cx="10" cy="14" r="1.600" fill="#222"/></svg>
  <svg class="vol" width="20" height="16" viewBox="0 0 20 16"><path d="M1 5.500h3L8.500 1v14L4 10.500H1zM11 5.500q2 2.500 0 5M13.500 3.500q4 4.500 0 9M16 1.500q5 6.500 0 13" fill="none" stroke="#222" stroke-width="1.300"/></svg>
  <svg class="bat" width="21" height="18" viewBox="0 0 21 18"><path d="M9 5h8q1.500 0 1.500 1.500v7q0 1.500-1.500 1.500H5M19.500 8v4" fill="none" stroke="#222" stroke-width="1.700"/><path d="M8 0q3 8-2 12l-3 5H1.500l2-5Q-2 6 4 3z" fill="#222"/></svg>
  <span class="clock">8:59 PM<br>10/12/2023</span><span class="count">2</span>
</footer>
</body>
</html>
```
FILE: styles.css
```css
* { box-sizing: border-box; }
body { margin: 0; width: 1920px; height: 1080px; overflow: hidden; display: flex; flex-direction: column; font-family: "Open Sans", "Noto Sans", sans-serif; color: #444; background: #e6e6e6; }
svg { display: block; flex: none; }
.defs { position: absolute; }
.open { overflow: visible; }
span { white-space: nowrap; }

/* title bar */
.titlebar { position: relative; height: 43px; flex: none; background: #b7472a; color: #fff; display: flex; align-items: center; padding-left: 26px; font-size: 14.5px; letter-spacing: -.2px; }
.titlebar > * { flex: none; }
.circuit { position: absolute; right: 0; top: 0; }
.titlebar > :not(.circuit) { z-index: 1; }
.autosave { width: 71px; padding-bottom: 2px; }
.toggle { width: 46px; height: 20px; margin-bottom: 3px; border: 1.5px solid #fff; border-radius: 10px; display: flex; align-items: center; gap: 7px; padding-left: 5px; font-size: 12.5px; }
.toggle i { width: 11px; height: 11px; border-radius: 50%; background: #fff; }
.save { margin: 3px 0 0 17px; }
.undo { margin: 3px 0 0 16px; }
.redo { margin: 3px 0 0 11px; }
.present { margin: 3px 0 0 14px; }
.custom { margin: 1px 0 0 20px; }
.doc { margin: 1px 0 0 53px; width: 434px; display: grid; grid-template-columns: 150px 13px 93px 12px auto; align-items: center; }
.doc b { font-size: 13px; }
.search { width: 460px; height: 31px; background: #fdc8b5; color: #8c1a1c; display: flex; align-items: center; gap: 18px; padding-left: 24px; }
.user { margin: 0 0 0 258px; width: 115px; }
.avatar { width: 30px; height: 30px; border-radius: 50%; background: #ca5010; display: grid; place-items: center; font-size: 12px; color: #fbe3d8; }
.win { color: #fff; margin-top: -1px; }
.w1 { margin-left: 34px; }
.w2 { margin: -2px 0 0 43px; }
.w3 { margin-left: 44px; }
.w4 { margin-left: 45px; }

/* ribbon */
.ribbon { height: 39px; flex: none; background: #f3f2f1; display: flex; align-items: center; border-bottom: 1px solid #d8d6d4; }
.tabs { width: 1468px; display: grid; grid-template-columns: 62px 73px 70px 67px 79px 108px 113px 110px 82px 81px 64px 60px; padding-left: 21px; font-size: 16px; letter-spacing: -.15px; }
.rbtn { height: 30px; border: 1px solid #bcbab8; border-radius: 5px; background: #e1dfdd; color: #b3b0ad; font-size: 16px; font-weight: 600; letter-spacing: -.25px; display: flex; align-items: center; gap: 4px; padding-left: 9px; white-space: nowrap; }
.comment { width: 40px; background: #fff; border-color: #7a7877; padding-left: 10px; }
.rec { width: 96px; margin-left: 10px; }
.teams { width: 170px; margin-left: 10px; }
.share { width: 102px; margin-left: 10px; }
.caret { margin-left: 8px; }

/* message bars */
.notice { height: 36px; flex: none; background: #fcf7b6; border-bottom: 1px solid #b5890a; display: flex; align-items: center; padding: 0 14px 0 12px; font-size: 14.5px; letter-spacing: -.225px; }
.notice.first { height: 38px; border-top: 1px solid #b5890a; letter-spacing: -.185px; }
.nicon { width: 26px; margin-right: 12px; }
.kind { width: 135px; letter-spacing: .08px; }
.k2 { letter-spacing: .04px; }
.msg { width: 760px; }
.under { text-decoration: underline; text-underline-offset: 2px; }
.m2 { width: 828px; }
.btn { height: 26px; background: #fff; border: 1px solid #ababab; display: grid; place-items: center; grid-auto-flow: column; place-content: center; letter-spacing: -.05px; padding-right: 2px; }
.enable { width: 138px; }
.act { width: 96px; }
.x { margin-left: auto; }

/* workspace */
.work { flex: none; height: 837px; display: flex; background: linear-gradient(#d2d2d2, #e6e6e6 10px); }
.thumbs { width: 279px; height: 837px; overflow: hidden; padding-top: 21px; }
.row { height: 125px; margin-bottom: 19px; padding: 3px 0 0 44px; position: relative; display: flex; align-items: flex-start; }
.num { width: 30px; margin: -10px 0 0 -30px; font-size: 20px; line-height: 32px; color: #444; }
.on .num { color: #d24726; }
.thumb { width: 210px; height: 119px; outline: 1px solid #c0c0c0; outline-offset: -1px; font-family: Lato, sans-serif; }
.on .thumb { outline: 3px solid #750b1c; outline-offset: 0; }
.sbar { display: flex; flex-direction: column; width: 19px; }
.sbtn { height: 19px; flex: none; background: #fff; border: 1px solid #999; display: grid; place-items: center; }
.sthumb { background: #fff; border: 1px solid #999; flex: none; }
.strack { background: #f3f3f3; flex: 1; }
.left { margin-top: 1px; height: 834px; }
.left .sthumb { height: 638px; }
.editor { width: 1617px; margin-left: 4px; padding-left: 2px; position: relative; border-left: 1px solid #bdbdbd; height: 835px; }
.canvas { height: 791px; display: flex; border-bottom: 1px solid #bdbdbd; }
.right { margin: 1px 0 0 117px; height: 767px; }
.right .sthumb { height: 98px; }
.right .strack { flex: none; height: 585px; }
.jump { margin: 4px 0 0 3px; flex: none; }

/* slide */
.slide { width: 1362px; height: 767px; margin: 10px 0 0 116px; background: #fff; border: 1px solid #c6c6c6; padding: 11px 0 0 55px; flex: none; font-family: Lato, Carlito, sans-serif; font-size: 23.1px; font-variant-ligatures: none; color: #000; }
.frame { width: 1269px; border: 1px solid #172c51; }
.f1 { height: 391px; }
.f2 { height: 342px; margin-top: 11px; }
.label { width: 193px; height: 42px; border: 1px solid #6b6b6b; margin: 11px 0 0 528px; padding-left: 9px; line-height: 38px; white-space: nowrap; }
.f2 .label { margin-top: 4px; letter-spacing: .05px; }
.acts { display: flex; gap: 11px; margin: 7px 0 0 1042px; color: #fff; }
.acts span { height: 32px; border: 1px solid #172c51; border-radius: 5px; background: #4472c4; text-align: center; line-height: 30px; }
.export { width: 97px; }
.new { width: 83px; }
.grid { display: grid; grid-template-columns: 42px 129px 138px 137px 143px 102px 198px 197px; margin: 16px 0 0 63px; width: 1086px; }
.g1 { grid-template-rows: 69px 60px 42px 40px; }
.g2 { grid-template-rows: 73px 60px 53px 39px; margin: 12px 0 0 54px; }
.grid > * { margin: 0; position: relative; line-height: 30px; padding: 4px 0 0 9px; background: #cfd5ea; border-left: 1px solid #fff; border-top: 1px solid #fff; font-style: normal; white-space: nowrap; }
.grid > i { font: 24px/30px "Liberation Sans", Arial, sans-serif; padding: 4px 0 0 10px; border-left: 0; }
.grid > i:nth-child(n+25) { padding-top: 3px; }
.grid > b { background: #4472c4; color: #fff; white-space: normal; border-top: 0; padding-top: 5px; letter-spacing: .2px; }
.grid > b:first-child { border-left: 0; }
.grid > :nth-child(n+9):nth-child(-n+16) { border-top: 4px solid #fff; padding-top: 3px; }
.grid > .alt { background: #e9ebf5; }
.grid > .dt:nth-child(n) { font-size: 17px; line-height: 23px; white-space: normal; text-align: center; padding: 4px 8px 0; }
.pin { position: absolute; width: 31px; height: 29px; }
.n0 { left: 78px; top: 4px; }
.n1 { left: 57px; top: 7px; }
.n2 { left: 93px; top: 7px; }
.n3 { left: 59px; top: 37px; }
.n4 { left: 107px; top: 7px; }

/* status bar */
.status { height: 28px; flex: none; background: #f3f2f1; border-top: 1px solid #c3c3c3; border-bottom: 1px solid #bdbdbd; display: flex; align-items: center; font-size: 12.5px; letter-spacing: -.03px; padding-left: 10px; }
.s1 { width: 107px; letter-spacing: .1px; }
.s2 { width: 1358px; }
.view { width: 50px; height: 26px; display: grid; place-items: center; }
.cur { background: #d0cfce; }
.zoom { margin-left: 7px; }
.pct { margin-left: 15px; width: 40px; letter-spacing: -.3px; }

/* taskbar */
.taskbar { height: 59px; flex: none; background: #eee; display: flex; align-items: center; color: #1b1b1b; position: relative; font-size: 14.5px; letter-spacing: .05px; }
.taskbar > * { flex: none; }
.wind { margin-left: 25px; margin-top: -4px; }
.weather { margin-left: 9px; width: 370px; line-height: 20px; margin-top: -2px; }
.weather small { display: block; font-size: 14.5px; color: #5a5a5a; }
.app { width: 55px; height: 49px; margin-top: -1px; display: grid; place-items: center; position: relative; }
.start { width: 54px; }
.find { width: 274px; height: 39px; margin-left: 5px; border-radius: 20px; background: #fbfbfb; border: 1px solid #d5d5d5; display: flex; align-items: center; padding-left: 14px; font-size: 16px; color: #555; letter-spacing: 0; }
.find span { margin-left: 12px; width: 170px; }
.tv { margin-left: 3px; }
.run::after { content: ""; position: absolute; left: 24px; bottom: -1px; width: 8px; height: 4px; border-radius: 2px; background: #8a8a8a; }
.active { width: 48px; margin-left: 3px; margin-right: 4px; background: #fafafa; border: 1px solid #e0e0e0; border-radius: 5px; }
.active::after { left: 14px; width: 20px; background: #0a78d4; }
.badge { position: absolute; width: 21px; height: 21px; right: 6px; top: 3px; border-radius: 50%; color: #fff; font: 12px/21px "Open Sans", sans-serif; text-align: center; }
.org { background: #f4511e; }
.teal { background: #0a8f9c; }
.blue { background: #0a78d4; width: 23px; height: 23px; right: 5px; font-size: 13px; line-height: 22px; }
.up { margin-left: 111px; }
.eng { margin-left: 26px; width: 52px; letter-spacing: -.2px; }
.vol { margin-left: 10px; }
.bat { margin-left: 8px; }
.clock { width: 99px; text-align: right; line-height: 20px; margin-top: -2px; letter-spacing: -.05px; }
.count { width: 19px; height: 19px; border-radius: 50%; background: #0a78d4; color: #fff; margin-left: 9px; text-align: center; line-height: 19px; font-size: 12px; }
```
